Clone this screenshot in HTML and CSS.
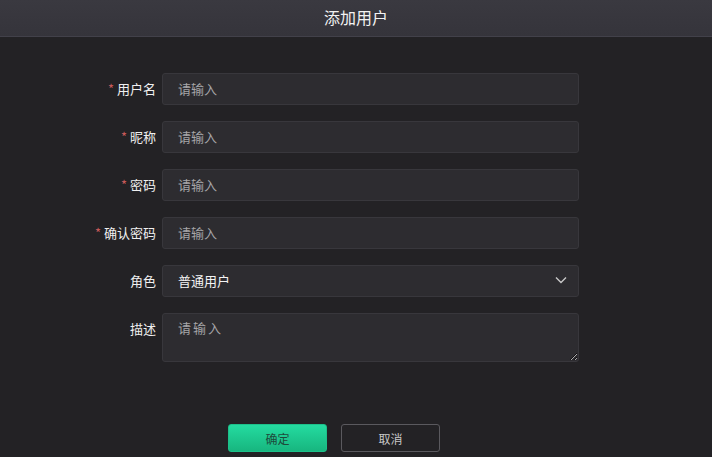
FILE: index.html
```html
<!DOCTYPE html>
<html lang="zh-CN">
<head>
<meta charset="utf-8">
<title>添加用户</title>
<link rel="stylesheet" href="styles.css">
</head>
<body>
<div class="dialog">
  <header class="dialog-header">添加用户</header>
  <form class="form">
    <div class="row">
      <label class="label"><span class="req">*</span>用户名</label>
      <input class="input" type="text" placeholder="请输入">
    </div>
    <div class="row">
      <label class="label"><span class="req">*</span>昵称</label>
      <input class="input" type="text" placeholder="请输入">
    </div>
    <div class="row">
      <label class="label"><span class="req">*</span>密码</label>
      <input class="input" type="text" placeholder="请输入">
    </div>
    <div class="row">
      <label class="label"><span class="req">*</span>确认密码</label>
      <input class="input" type="text" placeholder="请输入">
    </div>
    <div class="row">
      <label class="label">角色</label>
      <div class="select">
        <span class="select-value">普通用户</span>
        <svg class="chevron" width="12" height="8" viewBox="0 0 12 8"><path d="M1 1.5 L6 6.5 L11 1.5" fill="none" stroke="#c8c8c8" stroke-width="1.4"/></svg>
      </div>
    </div>
    <div class="row row-top">
      <label class="label label-top">描述</label>
      <textarea class="textarea" placeholder="请输入"></textarea>
    </div>
    <div class="actions">
      <button type="button" class="btn btn-primary">确定</button>
      <button type="button" class="btn btn-default">取消</button>
    </div>
  </form>
</div>
</body>
</html>
```
FILE: styles.css
```css
html, body {
  margin: 0;
  padding: 0;
  background: #232225;
  font-family: "Noto Sans CJK SC", "Noto Sans", sans-serif;
  color: #e6e6e6;
}
.dialog {
  width: 712px;
  height: 457px;
  overflow: hidden;
}
.dialog-header {
  height: 36px;
  line-height: 35px;
  text-align: center;
  font-size: 16px;
  color: #f2f2f2;
  background: linear-gradient(#3a3940, #35343b);
  border-bottom: 1px solid #42414a;
}
.form {
  padding-top: 36px;
  display: flex;
  flex-direction: column;
  gap: 16px;
}
.row {
  display: flex;
  align-items: center;
  height: 32px;
}
.row-top {
  align-items: flex-start;
  height: 49px;
}
.label {
  width: 162px;
  flex: none;
  padding-right: 6px;
  box-sizing: border-box;
  text-align: right;
  font-size: 13px;
  color: #f0f0f0;
  margin-top: -1px;
}
.label-top {
  padding-top: 6px;
  margin-top: 0;
}
.req {
  color: #c85a5a;
  margin-right: 3px;
}
.input, .select, .textarea {
  width: 417px;
  box-sizing: border-box;
  background: #2d2c30;
  border: 1px solid #38373c;
  border-radius: 3px;
  color: #e6e6e6;
  font-family: "Noto Sans CJK SC", "Noto Sans", sans-serif;
  font-size: 13px;
  outline: none;
}
.input {
  height: 32px;
  padding: 0 15px;
  padding-bottom: 2px;
}
.input::placeholder, .textarea::placeholder {
  color: #a5a5a8;
}
.select {
  height: 32px;
  padding: 0 11px 2px 15px;
  display: flex;
  align-items: center;
  justify-content: space-between;
}
.select-value {
  color: #f4f4f4;
}
.textarea {
  height: 49px;
  padding: 4px 15px;
  resize: vertical;
  letter-spacing: 2px;
  display: block;
}
.actions {
  display: flex;
  gap: 14px;
  padding-left: 228px;
  margin-top: 46px;
}
.btn {
  width: 99px;
  height: 28px;
  border-radius: 3px;
  font-family: "Noto Sans CJK SC", "Noto Sans", sans-serif;
  font-size: 12px;
  cursor: pointer;
}
.btn-primary {
  background: linear-gradient(#24dba0, #17b67f);
  border: 1px solid #1cc08a;
  color: #1e4a3b;
}
.btn-default {
  background: transparent;
  border: 1px solid #5a595e;
  color: #c8c8c8;
}
```
